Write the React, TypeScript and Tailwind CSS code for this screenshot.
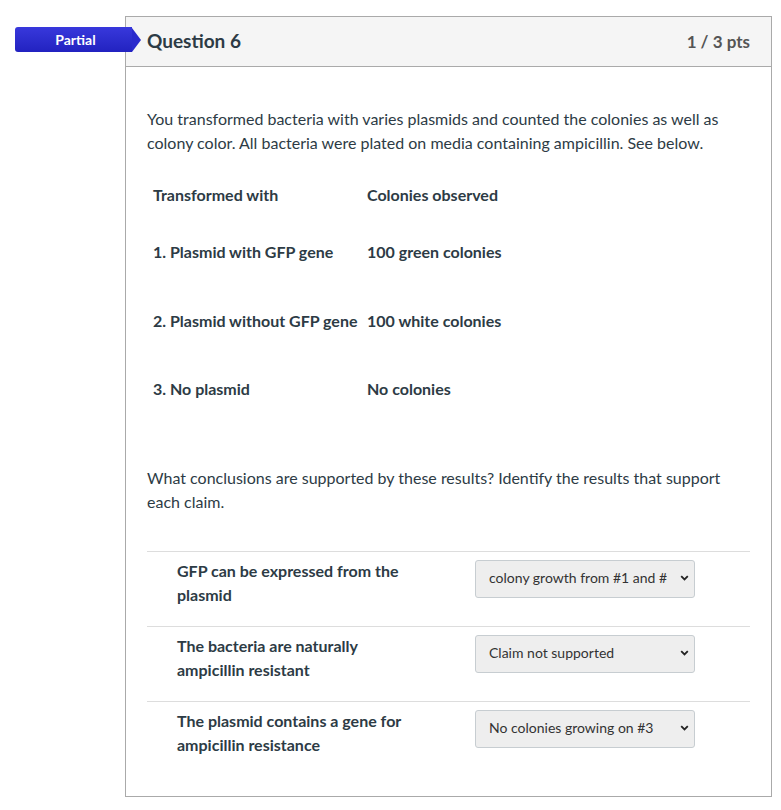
import React from "react";

const rows = [
  { a: "1. Plasmid with GFP gene", b: "100 green colonies", mt: "mt-[33px]" },
  { a: "2. Plasmid without GFP gene", b: "100 white colonies", mt: "mt-[45px]" },
  { a: "3. No plasmid", b: "No colonies", mt: "mt-[44px]" },
];

const claims = [
  { label: "GFP can be expressed from the plasmid", answer: "colony growth from #1 and #2" },
  { label: "The bacteria are naturally ampicillin resistant", answer: "Claim not supported" },
  { label: "The plasmid contains a gene for ampicillin resistance", answer: "No colonies growing on #3" },
];

function Chevron() {
  return (
    <svg width="9" height="6" viewBox="0 0 9 6" className="shrink-0">
      <path d="M1.2 1.2 L4.5 4.5 L7.8 1.2" fill="none" stroke="#222" strokeWidth="1.8" />
    </svg>
  );
}

export default function App() {
  return (
    <div className="relative min-h-[810px] bg-white text-[#2d3b45] font-['Lato','Liberation_Sans',sans-serif]">
      {/* status badge */}
      <div className="absolute left-[15px] top-[27px] flex h-[25px] items-center">
        <div className="flex h-[25px] w-[117px] items-center justify-center rounded-l-[3px] bg-gradient-to-b from-[#3838dc] to-[#2222c0] pl-[4px] text-[14px] font-bold text-white">
          Partial
        </div>
        <div className="h-0 w-0 border-y-[12.5px] border-l-[9px] border-y-transparent border-l-[#2a2acc]" />
      </div>

      <div className="ml-[125px] w-[647px] pt-[16px]">
        <div className="h-[781px] border border-[#aaaaaa]">
          <div className="flex h-[50px] items-center justify-between border-b border-[#aaaaaa] bg-[#f5f5f5] pl-[21px] pr-[21px]">
            <h2 className="text-[19px] font-bold text-[#2d3b45]">Question 6</h2>
            <span className="text-[17px] font-bold text-[#555]">1 / 3 pts</span>
          </div>

          <div className="px-[21px] pt-[40px] text-[16px] leading-[24px]">
            <p>
              You transformed bacteria with varies plasmids and counted the colonies as well as colony color. All bacteria
              were plated on media containing ampicillin. See below.
            </p>

            <div className="mt-[28px] pl-[6px] font-bold">
              <div className="flex">
                <span className="w-[214px]">Transformed with</span>
                <span>Colonies observed</span>
              </div>
              {rows.map((r) => (
                <div key={r.a} className={`flex ${r.mt}`}>
                  <span className="w-[214px]">{r.a}</span>
                  <span>{r.b}</span>
                </div>
              ))}
            </div>

            <p className="mt-[65px]">
              What conclusions are supported by these results? Identify the results that support each claim.
            </p>

            <div className="mt-[37px]">
              {claims.map((c) => (
                <div key={c.label} className="flex h-[75px] border-t border-[#dddddd] pl-[30px] pt-[7px]">
                  <div className="w-[240px] font-bold">{c.label}</div>
                  <div className="ml-[58px] mt-[1px] flex h-[38px] w-[220px] items-center rounded-[3px] border border-[#c7cdd1] bg-[#eeeeee] pb-[2px] pl-[13px] pr-[5px] text-[14px] text-[#333]">
                    <span className="mr-[13px] flex-1 overflow-hidden whitespace-nowrap">{c.answer}</span>
                    <Chevron />
                  </div>
                </div>
              ))}
            </div>
          </div>
        </div>
      </div>
    </div>
  );
}
